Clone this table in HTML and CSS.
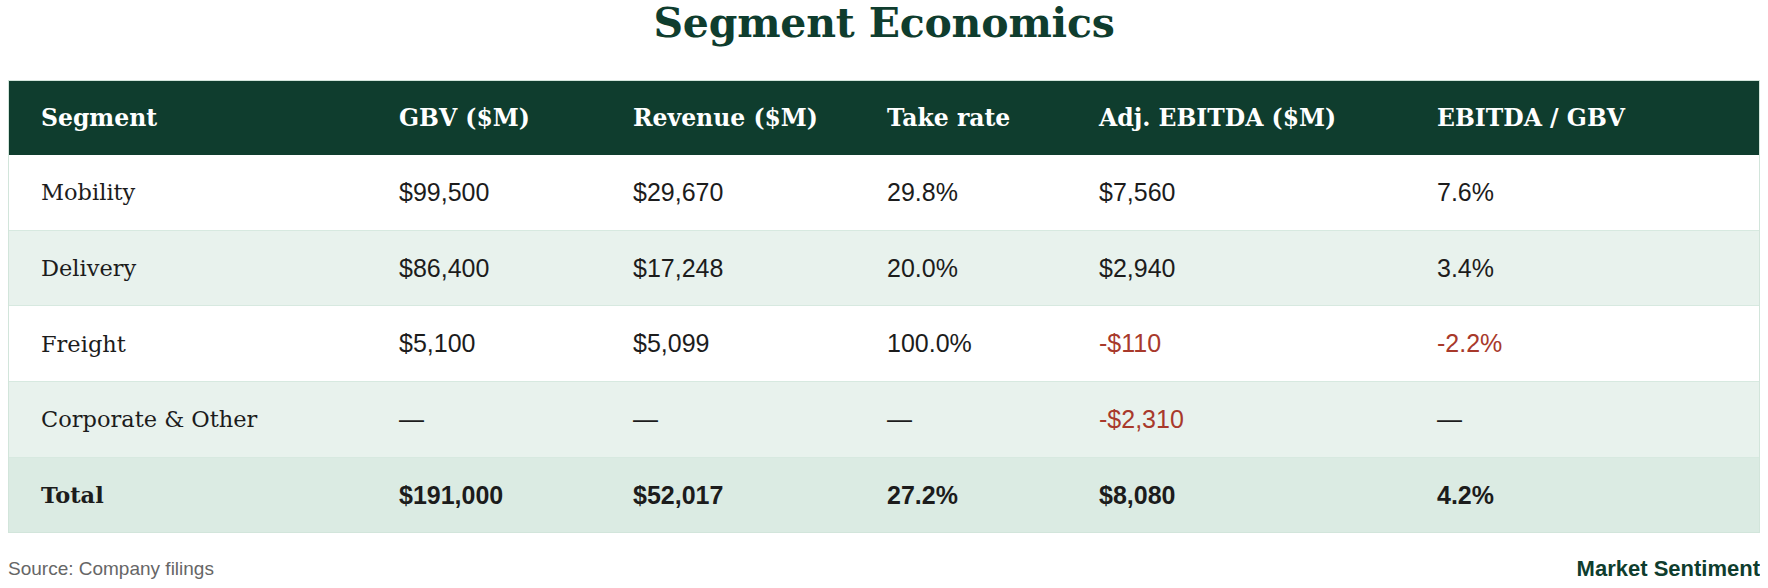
FILE: index.html
```html
<!DOCTYPE html>
<html lang="en">
<head>
<meta charset="utf-8">
<title>Segment Economics</title>
<link rel="stylesheet" href="styles.css">
</head>
<body>
<h1 class="title">Segment Economics</h1>
<table class="econ">
  <colgroup>
    <col class="c-seg"><col class="c-gbv"><col class="c-rev"><col class="c-take"><col class="c-ebitda"><col class="c-ratio">
  </colgroup>
  <thead>
    <tr>
      <th>Segment</th><th>GBV ($M)</th><th>Revenue ($M)</th><th>Take rate</th><th>Adj. EBITDA ($M)</th><th>EBITDA / GBV</th>
    </tr>
  </thead>
  <tbody>
    <tr>
      <td class="name">Mobility</td><td>$99,500</td><td>$29,670</td><td>29.8%</td><td>$7,560</td><td>7.6%</td>
    </tr>
    <tr class="alt">
      <td class="name">Delivery</td><td>$86,400</td><td>$17,248</td><td>20.0%</td><td>$2,940</td><td>3.4%</td>
    </tr>
    <tr>
      <td class="name">Freight</td><td>$5,100</td><td>$5,099</td><td>100.0%</td><td class="neg">-$110</td><td class="neg">-2.2%</td>
    </tr>
    <tr class="alt">
      <td class="name">Corporate &amp; Other</td><td>—</td><td>—</td><td>—</td><td class="neg">-$2,310</td><td>—</td>
    </tr>
    <tr class="total">
      <td class="name">Total</td><td>$191,000</td><td>$52,017</td><td>27.2%</td><td>$8,080</td><td>4.2%</td>
    </tr>
  </tbody>
</table>
<footer class="foot">
  <span class="source">Source: Company filings</span>
  <span class="brand">Market Sentiment</span>
</footer>
</body>
</html>
```

FILE: styles.css
```css
html, body {
  background: #ffffff;
}
body {
  margin: 0 8px;
  font-family: "Liberation Sans", Arial, sans-serif;
  color: #1c1c1c;
}
.title {
  margin: 0 0 34px;
  padding-top: 1px;
  font-family: "DejaVu Serif", "Liberation Serif", serif;
  font-weight: bold;
  font-size: 41px;
  line-height: 45px;
  text-align: center;
  color: #0f3d2e;
  letter-spacing: -0.2px;
}
.econ {
  width: 100%;
  table-layout: fixed;
  border-collapse: separate;
  border-spacing: 0;
  border: 1px solid #d2e5db;
}
.c-seg { width: 358px; }
.c-gbv { width: 234px; }
.c-rev { width: 254px; }
.c-take { width: 212px; }
.c-ebitda { width: 338px; }
.econ th {
  background: #0f3d2e;
  color: #ffffff;
  font-family: "DejaVu Serif", "Liberation Serif", serif;
  font-weight: bold;
  font-size: 23.5px;
  text-align: left;
  height: 74px;
  padding: 0 0 0 32px;
  vertical-align: middle;
  white-space: nowrap;
}
.econ td {
  height: 74.7px;
  padding: 0 0 0 32px;
  vertical-align: middle;
  font-size: 25px;
  border-bottom: 1px solid #d7e9e0;
  white-space: nowrap;
}
.econ td.name {
  font-family: "DejaVu Serif", "Liberation Serif", serif;
  font-size: 22.5px;
}
.econ tr.alt td {
  background: #e8f2ed;
}
.econ tr.total td {
  background: #dbebe3;
  font-weight: bold;
  border-bottom: none;
}
.econ td.neg {
  color: #a8392b;
}
.foot {
  display: flex;
  justify-content: space-between;
  align-items: center;
  padding-top: 22px;
  height: 28px;
}
.source {
  font-size: 19px;
  color: #666666;
}
.brand {
  font-size: 22px;
  font-weight: bold;
  color: #0f3d2e;
}
```
